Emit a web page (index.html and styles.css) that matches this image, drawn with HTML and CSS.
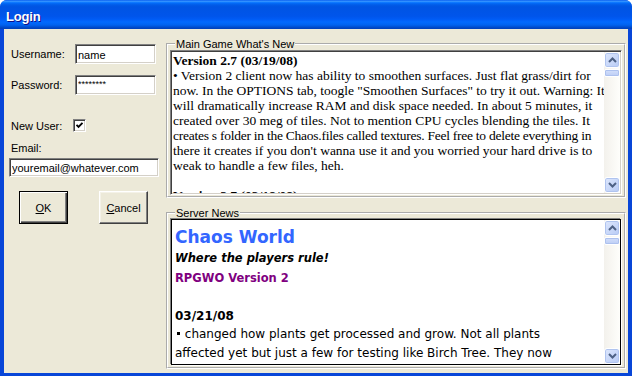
FILE: index.html
```html
<!DOCTYPE html>
<html lang="en">

<head>
    <meta charset="UTF-8">
    <title>Login</title>
    <link rel="stylesheet" href="styles.css">
</head>

<body>
    <div class="window">
        <div class="titlebar"><span class="title">Login</span></div>
        <div class="client">
            <div class="login-pane">
                <div class="field-row">
                    <label for="username">Username:</label>
                    <input type="text" id="username" class="textbox" value="name">
                </div>
                <div class="field-row row-password">
                    <label for="password">Password:</label>
                    <input type="text" id="password" class="textbox secret" value="********">
                </div>
                <div class="field-row row-check">
                    <label>New User:</label>
                    <span class="checkbox">
                        <svg width="9" height="9" viewBox="0 0 9 9">
                            <polyline points="1.5,3.8 3.5,5.8 7.5,1.8" fill="none" stroke="#000" stroke-width="1.9"/>
                        </svg>
                    </span>
                </div>
                <label class="email-label" for="email">Email:</label>
                <input type="text" id="email" class="textbox email" value="youremail@whatever.com">
                <div class="button-row">
                    <button class="btn btn-default"><u>O</u>K</button>
                    <button class="btn"><u>C</u>ancel</button>
                </div>
            </div>

            <div class="news-pane">
                <fieldset class="group group-main">
                    <legend>Main Game What's New</legend>
                    <div class="richbox">
                        <div class="rich-text whats-new">
                            <div class="line bold">Version 2.7 (03/19/08)</div>
                            <div class="line">&bull; Version 2 client now has ability to smoothen surfaces. Just flat grass/dirt for</div>
                            <div class="line">now. In the OPTIONS tab, toogle "Smoothen Surfaces" to try it out. Warning: It</div>
                            <div class="line">will dramatically increase RAM and disk space needed. In about 5 minutes, it</div>
                            <div class="line">created over 30 meg of tiles. Not to mention CPU cycles blending the tiles. It</div>
                            <div class="line tight">creates s folder in the Chaos.files called textures. Feel free to delete everything in</div>
                            <div class="line">there it creates if you don't wanna use it and you worried your hard drive is to</div>
                            <div class="line">weak to handle a few files, heh.</div>
                            <div class="line">&nbsp;</div>
                            <div class="line bold">Version 2.7 (03/18/08)</div>
                        </div>
                        <div class="scrollbar">
                            <div class="scroll-btn">
                                <svg width="9" height="6" viewBox="0 0 9 6"><polyline points="1,5 4.5,1.5 8,5" fill="none" stroke="#4d6185" stroke-width="2"/></svg>
                            </div>
                            <div class="scroll-thumb"></div>
                            <div class="scroll-track"></div>
                            <div class="scroll-btn">
                                <svg width="9" height="6" viewBox="0 0 9 6"><polyline points="1,1 4.5,4.5 8,1" fill="none" stroke="#4d6185" stroke-width="2"/></svg>
                            </div>
                        </div>
                    </div>
                </fieldset>

                <fieldset class="group group-server">
                    <legend>Server News</legend>
                    <div class="richbox richbox-dark">
                        <div class="rich-text server-news">
                            <div class="chaos">Chaos World</div>
                            <div class="tagline">Where the players rule!</div>
                            <div class="version">RPGWO Version 2</div>
                            <div class="blank">&nbsp;</div>
                            <div class="date">03/21/08</div>
                            <div class="line"><span class="square"></span> changed how plants get processed and grow. Not all plants</div>
                            <div class="line">affected yet but just a few for testing like Birch Tree. They now</div>
                        </div>
                        <div class="scrollbar">
                            <div class="scroll-btn">
                                <svg width="9" height="6" viewBox="0 0 9 6"><polyline points="1,5 4.5,1.5 8,5" fill="none" stroke="#4d6185" stroke-width="2"/></svg>
                            </div>
                            <div class="scroll-thumb"></div>
                            <div class="scroll-track"></div>
                            <div class="scroll-btn">
                                <svg width="9" height="6" viewBox="0 0 9 6"><polyline points="1,1 4.5,4.5 8,1" fill="none" stroke="#4d6185" stroke-width="2"/></svg>
                            </div>
                        </div>
                    </div>
                </fieldset>
            </div>
        </div>
    </div>
</body>

</html>
```

FILE: styles.css
```css
body {
    margin: 0;
    background-color: #fff;
    font-family: "Liberation Sans", Arial, sans-serif;
    font-size: 11px;
    color: #000;
}

.window {
    width: 632px;
    height: 376px;
    display: flex;
    flex-direction: column;
    background-color: #0846d8;
    border-radius: 7px 7px 0 0;
    overflow: hidden;
}

.titlebar {
    height: 29px;
    flex: none;
    display: flex;
    align-items: center;
    padding: 4px 0 0 6px;
    box-sizing: border-box;
    background: linear-gradient(to bottom, #0058ee 0%, #3a93ff 4%, #288eff 6%, #127dff 8%, #036ffc 10%, #0262ee 14%, #0057e5 20%, #0054e3 24%, #0055eb 56%, #005bf5 66%, #026afe 76%, #0062ef 86%, #0052d6 92%, #0046c4 96%, #0040b8 100%);
}

.title {
    color: #fff;
    font-weight: bold;
    font-size: 13px;
    letter-spacing: -0.2px;
    text-shadow: 1px 1px 0 #0f1089;
}

.client {
    flex: 1;
    display: flex;
    margin: 0 4px 3px 4px;
    background-color: #ece9d8;
    min-width: 0;
}

/* left side: login form */

.login-pane {
    width: 155px;
    flex: none;
    padding: 15px 0 0 7px;
}

.field-row {
    display: flex;
    align-items: center;
    height: 20px;
}

.field-row label {
    width: 64px;
    flex: none;
}

.row-password {
    margin-top: 11px;
}

.row-check {
    margin-top: 24px;
    height: 13px;
}

.row-check label {
    width: 62px;
}

.textbox {
    box-sizing: border-box;
    width: 81px;
    height: 20px;
    margin: 0;
    padding: 1px 2px 0 2px;
    font-family: "Liberation Sans", Arial, sans-serif;
    font-size: 11px;
    color: #000;
    background-color: #fff;
    border: 1px solid;
    border-color: #808080 #fff #fff #808080;
    box-shadow: inset 1px 1px 0 #404040, inset -1px -1px 0 #d4d0c8;
    outline: none;
}

.secret {
    font-size: 9px;
    padding-bottom: 3px;
}

.checkbox {
    box-sizing: border-box;
    width: 13px;
    height: 13px;
    display: flex;
    align-items: center;
    justify-content: center;
    background-color: #fff;
    border: 1px solid;
    border-color: #808080 #fff #fff #808080;
    box-shadow: inset 1px 1px 0 #404040, inset -1px -1px 0 #d4d0c8;
}

.email-label {
    display: block;
    margin-top: 10px;
    line-height: 13px;
}

.textbox.email {
    display: block;
    width: 150px;
    height: 19px;
    margin: 3px 0 0 -2px;
}

.button-row {
    display: flex;
    gap: 31px;
    margin-top: 14px;
    padding-left: 8px;
}

.btn {
    box-sizing: border-box;
    width: 49px;
    height: 33px;
    padding: 0;
    font-family: "Liberation Sans", Arial, sans-serif;
    font-size: 11px;
    color: #000;
    background-color: #ece9d8;
    border: 1px solid;
    border-color: #fff #404040 #404040 #fff;
    box-shadow: inset -1px -1px 0 #808080, inset 1px 1px 0 #f4f2e8;
}

.btn-default {
    border: 1px solid #000;
    box-shadow: inset 1px 1px 0 #fff, inset -1px -1px 0 #404040, inset -2px -2px 0 #808080;
}

/* right side: news boxes */

.news-pane {
    flex: 1;
    min-width: 0;
    display: flex;
    flex-direction: column;
    padding: 9px 2px 4px 0;
}

.group {
    margin: 0;
    padding: 0 2px 1px 2px;
    border: 2px groove #fff;
    min-width: 0;
}

.group legend {
    margin-left: 5px;
    padding: 0 1px;
    line-height: 12px;
}

.group-main {
    height: 160px;
    box-sizing: border-box;
    flex: none;
}

.group-server {
    flex: 1;
    margin-top: 9px;
    padding-bottom: 2px;
}

.group-server legend {
    margin-bottom: -1px;
}

.richbox {
    box-sizing: border-box;
    height: 145px;
    display: flex;
    background-color: #fff;
    border: 1px solid;
    border-color: #808080 #fff #fff #808080;
    box-shadow: inset 1px 1px 0 #404040, inset -1px -1px 0 #d4d0c8;
    padding: 1px;
    overflow: hidden;
}

.richbox-dark {
    height: 146px;
    border: 1px solid #000;
    box-shadow: -1px -1px 0 #808080, 1px 1px 0 #fff;
    padding: 0;
    margin: 1px 1px 0 1px;
}

.rich-text {
    flex: 1;
    min-width: 0;
    overflow: hidden;
}

.rich-text .line {
    white-space: nowrap;
}

.whats-new {
    font-family: "Liberation Serif", "Times New Roman", serif;
    font-size: 13.5px;
    line-height: 15px;
    padding: 1px 0 0 1px;
}

.whats-new .tight {
    letter-spacing: -0.25px;
}

.bold {
    font-weight: bold;
}

.server-news {
    font-family: "DejaVu Sans", sans-serif;
    padding: 6px 0 0 3px;
}

.chaos {
    font-size: 17px;
    font-weight: bold;
    line-height: 22px;
    color: #3366ff;
}

.tagline {
    font-size: 11.5px;
    font-weight: bold;
    font-style: italic;
    line-height: 20px;
}

.version {
    font-size: 11.5px;
    font-weight: bold;
    line-height: 20px;
    color: #800080;
}

.blank {
    line-height: 20px;
}

.date {
    font-size: 12px;
    font-weight: bold;
    line-height: 17px;
}

.server-news .line {
    font-size: 12px;
    line-height: 19px;
}

.square {
    display: inline-block;
    width: 3px;
    height: 3px;
    margin: 0 1px 3px 2px;
    background-color: #000;
}

/* xp style scroll bar */

.scrollbar {
    width: 16px;
    flex: none;
    display: flex;
    flex-direction: column;
    background: linear-gradient(to right, #f3f1ec, #fefefb);
}

.scroll-btn {
    box-sizing: border-box;
    height: 16px;
    flex: none;
    display: flex;
    align-items: center;
    justify-content: center;
    border: 1px solid #fff;
    border-radius: 3px;
    background: linear-gradient(135deg, #dde7fd, #b8cbf5);
    box-shadow: inset 0 0 0 1px #b0c4ef;
}

.scroll-thumb {
    box-sizing: border-box;
    height: 8px;
    flex: none;
    margin-top: 1px;
    border: 1px solid #fff;
    border-radius: 2px;
    background: linear-gradient(to bottom, #d3dffb, #bccdf5);
    box-shadow: inset 0 0 0 1px #adc1ee;
}

.scroll-track {
    flex: 1;
}
```
